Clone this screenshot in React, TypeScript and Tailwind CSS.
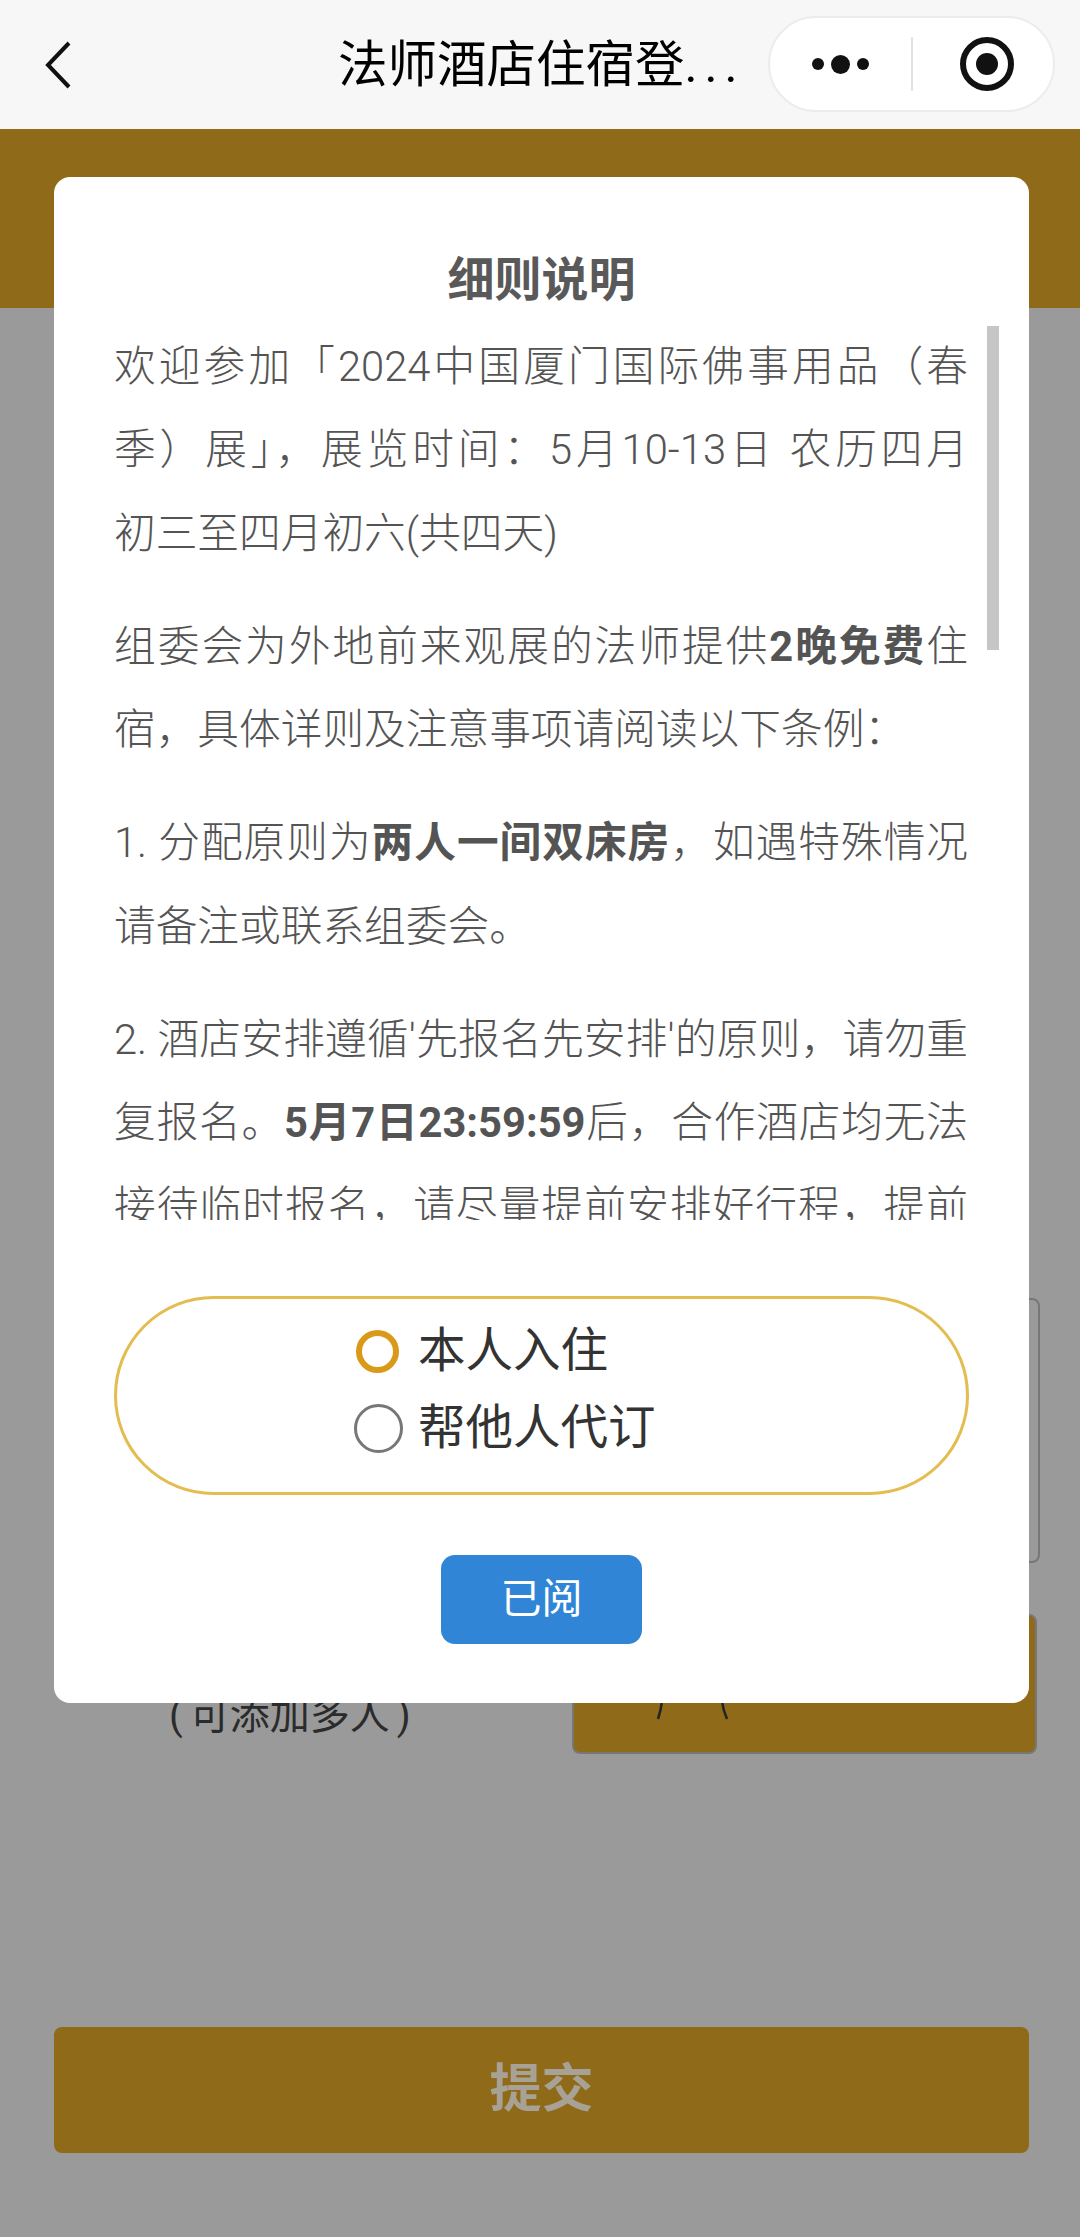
export default function App() {
  const font = "font-['Roboto','Noto_Sans_CJK_SC',sans-serif]";
  const para = "mb-[30px] whitespace-nowrap";
  const full = "block w-[854px] text-justify [text-align-last:justify]";
  const strong = "font-bold";
  return (
    <div className={`relative w-[1080px] h-[2237px] overflow-hidden bg-[#9a9a9a] ${font}`}>
      {/* Header */}
      <header className="relative flex h-[129px] items-center bg-[#f7f7f7]">
        <svg className="ml-[42px] h-[50px] w-[32px]" viewBox="0 0 32 50" fill="none" stroke="#111" strokeWidth="4">
          <path d="M27 3 L6 25 L27 47" />
        </svg>
        <div className="ml-[264px] w-[410px] whitespace-nowrap text-[49.5px] leading-[60px] text-black">
          法师酒店住宿登<span className="tracking-[7px]">...</span>
        </div>
        <div className="absolute left-[768px] top-[16px] flex h-[96px] w-[287px] items-center rounded-full border-2 border-[#ececec] bg-white">
          <div className="flex w-[141px] items-center justify-center gap-[7px]">
            <span className="h-[12px] w-[12px] rounded-full bg-[#111]" />
            <span className="h-[19px] w-[19px] rounded-full bg-[#111]" />
            <span className="h-[12px] w-[12px] rounded-full bg-[#111]" />
          </div>
          <div className="h-[54px] w-[2px] bg-[#e2e2e2]" />
          <div className="ml-[47px] flex h-[54px] w-[54px] items-center justify-center rounded-full border-[6px] border-[#111]">
            <span className="h-[22px] w-[22px] rounded-full bg-[#111]" />
          </div>
        </div>
      </header>

      {/* Gold band */}
      <div className="h-[179px] bg-[#8f6a18]" />

      {/* Underlying form */}
      <div className="pt-[990px]">
        <div className="ml-[572px] h-[265px] w-[468px] rounded-lg border-2 border-[#777]" />
        <div className="mt-[51px] flex h-[140px] items-end">
          <div className="w-[572px] shrink-0 whitespace-nowrap pb-[13px] pl-[169px] text-[40px] leading-[50px] text-[#2b2b2b]">
            <span className="mr-[7px]">(</span>可添加多人<span className="ml-[7px]">)</span>
          </div>
          <div className="relative h-[140px] w-[465px] shrink-0 rounded-lg border-2 border-[#777] bg-[#8f6a18]">
            <svg className="absolute left-[82px] top-[85px] h-[20px] w-[76px]" viewBox="0 0 76 20" fill="none" stroke="#222" strokeWidth="2.5">
              <path d="M6 0 Q5 9 2 18" />
              <path d="M66 0 Q67 9 71 18" />
            </svg>
          </div>
        </div>
        <div className="ml-[54px] mr-[51px] mt-[273px] flex h-[126px] items-center justify-center rounded-lg bg-[#8f6a18] text-[52px] font-bold text-[#a8a296]">提交</div>
      </div>

      {/* Modal */}
      <div className="absolute left-[54px] top-[177px] flex h-[1526px] w-[975px] flex-col items-center rounded-2xl bg-white pt-[72px]">
        <div className="h-[62px] text-[47px] font-bold leading-[62px] text-[#595959]">细则说明</div>
        <div className="mt-[14px] h-[895px] w-[975px] overflow-hidden pl-[60px] text-[41.7px] font-light leading-[83.3px] text-[#545454]">
          <p className={para}>
            <span className={full}>欢迎参加「2024中国厦门国际佛事用品（春</span>
            <span className={full}>季）展」，展览时间：5月10-13日 农历四月</span>
            <span className="block">初三至四月初六(共四天)</span>
          </p>
          <p className={para}>
            <span className={full}>组委会为外地前来观展的法师提供<b className={strong}>2晚免费</b>住</span>
            <span className="block">宿，具体详则及注意事项请阅读以下条例：</span>
          </p>
          <p className={para}>
            <span className={full}>1. 分配原则为<b className={strong}>两人一间双床房</b>，如遇特殊情况</span>
            <span className="block">请备注或联系组委会。</span>
          </p>
          <p className={para}>
            <span className={full}>2. 酒店安排遵循'先报名先安排'的原则，请勿重</span>
            <span className={full}>复报名。<b className={strong}>5月7日23:59:59</b>后，合作酒店均无法</span>
            <span className={full}>接待临时报名，请尽量提前安排好行程，提前</span>
          </p>
        </div>
        <div className="absolute left-[933px] top-[149px] h-[324px] w-[12px] bg-[#c6c6c6]" />
        <div className="mt-[76px] h-[199px] w-[855px] rounded-full border-[3px] border-[#e3bd4f] pl-[237px] pt-[14px] text-[47.5px] leading-[77px] text-[#333]">
          <div className="flex h-[77px] items-center">
            <span className="ml-[2px] mr-[19px] h-[43px] w-[43px] rounded-full border-[6px] border-[#d99a1a]" />
            <span>本人入住</span>
          </div>
          <div className="flex h-[77px] items-center">
            <span className="mr-[15px] h-[49px] w-[49px] rounded-full border-[3px] border-[#777]" />
            <span>帮他人代订</span>
          </div>
        </div>
        <div className="mt-[60px] flex h-[89px] w-[201px] items-center justify-center rounded-[14px] bg-[#3085d6] text-[41px] text-white">已阅</div>
      </div>
    </div>
  );
}
